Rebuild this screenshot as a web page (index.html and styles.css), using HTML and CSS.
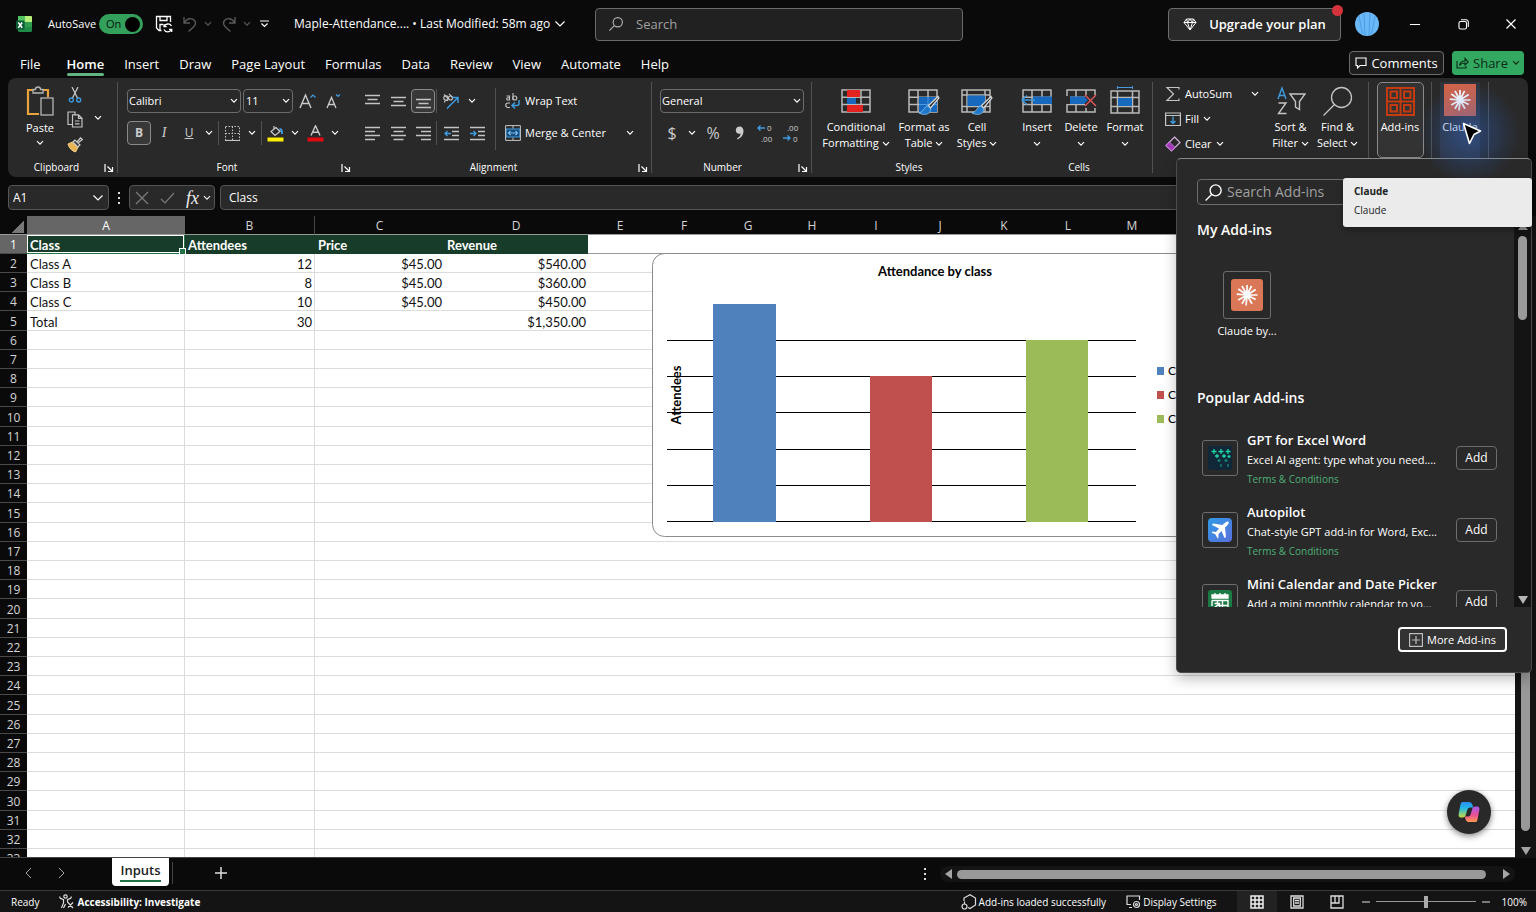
FILE: index.html
```html
<!DOCTYPE html>
<html lang="en">
<head>
<meta charset="utf-8">
<title>Maple-Attendance - Excel</title>
<link rel="stylesheet" href="styles.css">
</head>
<body>
<svg class="defs" aria-hidden="true">
  <symbol id="chev" viewBox="0 0 8 6"><path d="M1 1.2 4 4.2 7 1.2" fill="none" stroke="currentColor" stroke-width="1.2"/></symbol>
  <symbol id="chevbig" viewBox="0 0 12 8"><path d="M1.500 1.500 6 6 10.500 1.500" fill="none" stroke="currentColor" stroke-width="1.2"/></symbol>
  <symbol id="launch" viewBox="0 0 10 10"><path d="M1 9V1M3.500 3.500 8.500 8.500M8.500 4v4.500H4" fill="none" stroke="currentColor" stroke-width="1.2"/></symbol>
  <symbol id="lens" viewBox="0 0 18 18"><circle cx="11" cy="7" r="5.2" fill="none" stroke="currentColor" stroke-width="1.3"/><path d="M7.2 10.8 1.5 16.5" stroke="currentColor" stroke-width="1.3"/></symbol>
  <symbol id="burst" viewBox="0 0 24 24"><path d="M12 12V1M12 12 17 2M12 12 21.500 6M12 12H23.500M12 12 21.500 17M12 12 17.500 21.500M12 12 11 23.500M12 12 6.500 21.500M12 12 2.500 17.500M12 12 .8 11M12 12 2.500 5.500M12 12 6.500 2" fill="none" stroke="#fff" stroke-width="1.9"/><circle cx="12" cy="12" r="3" fill="#fff"/></symbol>
  <symbol id="grid" viewBox="0 0 30 24"><path d="M1 1H29V23H1ZM10 1V23M20 1V23M1 8.300H29M1 15.600H29" fill="none" stroke="#b9b9b9" stroke-width="1.5"/></symbol>
  <symbol id="brush" viewBox="0 0 22 20"><path d="M20 1.500 10.500 10.500 12.500 13 21 3Z" fill="#2a2a2a" stroke="#ddd" stroke-width="1.2"/><path d="M10 11C6 11 7 16 1 18 7 21 13 19 12.500 14Z" fill="#1f78c8" stroke="#8ec6f2" stroke-width=".8"/></symbol>
</svg>

<header class="titlebar">
  <div class="title-left">
    <svg class="logo" viewBox="0 0 16 16"><rect x="2" width="14" height="16" rx="1.500" fill="#1e8a45"/><path d="M2 0h7v6H2z" fill="#4fc35f"/><path d="M9 0h6a1 1 0 0 1 1 1v5H9z" fill="#b9ee7a"/><path d="M9 6h7v5H9z" fill="#2f9d4d"/><rect y="4.500" width="8.500" height="9" rx="1" fill="#0c5c35"/><path d="M2.300 6.500 6.200 11.700M6.200 6.500 2.300 11.700" stroke="#fff" stroke-width="1.500"/></svg>
    <label class="autosave"><span>AutoSave</span><input type="checkbox" checked><span class="switch">On</span></label>
    <button class="tb" aria-label="Save"><svg width="18" height="18" viewBox="0 0 18 18" fill="none" stroke="#fff" stroke-width="1.300"><path d="M6.500 15.500H4L1.500 13V1.500H15.500V7M5 1.500V5.500H12V1.500M5 15V9.500H8"/><path d="M16.500 11A4 4 0 0 0 9.300 11.500M9 9v2.700h2.700M9 14.500a4 4 0 0 0 7.300 0M16.700 17v-2.700h-2.700"/></svg></button>
    <button class="tb dim" aria-label="Undo"><svg width="16" height="16" viewBox="0 0 16 16" fill="none" stroke="currentColor" stroke-width="1.300"><path d="M2 1V7H8M2 7C5 2 10 1.500 12.500 4.500S13 10 6.500 15.500"/></svg><svg class="c"><use href="#chev"/></svg></button>
    <button class="tb dim" aria-label="Redo"><svg width="16" height="16" viewBox="0 0 16 16" fill="none" stroke="currentColor" stroke-width="1.300"><path d="M14 1V7H8M14 7C11 2 6 1.500 3.500 4.500S3 10 9.500 15.500"/></svg><svg class="c"><use href="#chev"/></svg></button>
    <button class="tb" aria-label="Customize toolbar"><svg width="9" height="8" viewBox="0 0 9 8" fill="none" stroke="#fff" stroke-width="1.200"><path d="M0 1H9M1.500 3.500 4.500 6.500 7.500 3.500"/></svg></button>
    <button class="docname">Maple-Attendance.... • Last Modified: 58m ago <svg class="c big"><use href="#chevbig"/></svg></button>
  </div>
  <label class="search"><svg><use href="#lens"/></svg><input type="text" placeholder="Search" aria-label="Search"></label>
  <div class="title-right">
    <button class="upgrade"><svg width="14" height="13" viewBox="0 0 14 13" fill="none" stroke="#fff" stroke-width="1"><path d="M3.500 1H10.500L13 4.500 7 12 1 4.500ZM1 4.500H13M4.500 4.500 7 12 9.500 4.500M3.500 1 4.500 4.500 7 1 9.500 4.500 10.500 1"/></svg>Upgrade your plan<i class="dot"></i></button>
    <svg class="avatar" viewBox="0 0 24 24"><circle cx="12" cy="12" r="12" fill="#6bb8f8"/><path d="M9 1.500 10 23M15 1.500 14 23M4 4 7.500 22M20 4 16.500 22" stroke="#4b9ce6" stroke-width="1" fill="none"/></svg>
    <button class="win" aria-label="Minimize"><svg width="10" height="10" viewBox="0 0 10 10"><path d="M0 5.500H10" stroke="#fff"/></svg></button>
    <button class="win" aria-label="Restore"><svg width="11" height="11" viewBox="0 0 11 11" fill="none" stroke="#fff" stroke-width="1.100"><rect x="1" y="2.500" width="7.500" height="7.500" rx="1.500"/><path d="M3 .8H8A2.200 2.200 0 0 1 10.300 3V8"/></svg></button>
    <button class="win" aria-label="Close"><svg width="10" height="10" viewBox="0 0 10 10"><path d="M.5.500 9.500 9.500M9.500.500.5 9.500" stroke="#fff" stroke-width="1.200"/></svg></button>
  </div>
</header>

<nav class="tabs">
  <button class="file">File</button><button class="on">Home</button><button>Insert</button><button>Draw</button><button>Page Layout</button><button>Formulas</button><button>Data</button><button>Review</button><button>View</button><button>Automate</button><button>Help</button>
  <div class="tabs-right">
    <button class="comments"><svg width="12" height="12" viewBox="0 0 12 12" fill="none" stroke="#fff" stroke-width="1.100"><path d="M1 1H11V8.500H5L2.500 11V8.500H1Z"/></svg>Comments</button>
    <button class="share"><svg width="13" height="12" viewBox="0 0 13 12" fill="none" stroke="#0a2a16" stroke-width="1.100"><path d="M1 4V11H10V9M3.500 8.500C4 5.500 6 4 9 4V1.500L12.300 5 9 8V6C6.500 6 5 6.500 3.500 8.500Z"/></svg>Share <svg class="c"><use href="#chev"/></svg></button>
  </div>
</nav>

<section class="ribbon">
  <div class="group g-clip">
    <div class="body">
      <button class="large paste"><svg width="28" height="30" viewBox="0 0 28 30" fill="none"><path d="M7 4H2V28H13M17 4H22V11" stroke="#e8a33d" stroke-width="2.200"/><path d="M7 7V3.500H9.500A2.500 2.500 0 0 1 14.500 3.500H17V7Z" stroke="#b5b5b5" stroke-width="1.300"/><rect x="15" y="12" width="12" height="17" fill="#2a2a2a" stroke="#b5b5b5" stroke-width="1.300"/></svg><span>Paste</span><svg class="c"><use href="#chev"/></svg></button>
      <div class="stack">
        <button aria-label="Cut"><svg width="14" height="16" viewBox="0 0 14 16" fill="none"><path d="M4 0 9.500 11M10 0 4.500 11" stroke="#ccc" stroke-width="1.200"/><circle cx="3.300" cy="13" r="2" stroke="#3f9be0" stroke-width="1.300"/><circle cx="10.700" cy="13" r="2" stroke="#3f9be0" stroke-width="1.300"/></svg></button>
        <button aria-label="Copy"><svg width="16" height="17" viewBox="0 0 16 17" fill="none" stroke="#c4c4c4" stroke-width="1.200"><path d="M5.500 13.500H1V1H8V3.500M5.500 3.800H11.500L15 7.300V16H5.500ZM11.500 3.800V7.300H15M8 10H12.500M8 12.800H12.500"/></svg></button>
        <button aria-label="Format painter"><svg width="16" height="16" viewBox="0 0 16 16" fill="none"><path d="M1 7 5.500 5 11 10.500 8.500 15C5 14 2 11 1 7Z" fill="#e9b452" stroke="#f3cf8a"/><path d="M6 5 8 3 10 5 13.500.8 15.300 2.500 11 6 13 8 10.800 10Z" fill="#333" stroke="#ccc" stroke-width="1.200"/></svg></button>
      </div>
      <button class="mini" aria-label="Copy options"><svg class="c"><use href="#chev"/></svg></button>
    </div>
    <div class="label">Clipboard<button class="launcher" aria-label="Clipboard settings"><svg><use href="#launch"/></svg></button></div>
  </div>

  <div class="group g-font">
    <div class="rows">
      <div class="row"><select class="sel s-font" aria-label="Font"><option>Calibri</option></select><select class="sel s-size" aria-label="Font size"><option>11</option></select>
        <button class="ib" aria-label="Grow font"><svg width="18" height="16" viewBox="0 0 18 16" fill="none"><path d="M1 15 6.500 2 12 15M3 10.500H10" stroke="#ccc" stroke-width="1.400"/><path d="M11.500 4.500 14 2 16.500 4.500" stroke="#3f9be0" stroke-width="1.200"/></svg></button>
        <button class="ib" aria-label="Shrink font"><svg width="16" height="16" viewBox="0 0 16 16" fill="none"><path d="M1 15 5.500 4.500 10 15M2.500 11.500H8.500" stroke="#ccc" stroke-width="1.300"/><path d="M10 1.500 12 3.500 14 1.500" stroke="#3f9be0" stroke-width="1.200"/></svg></button></div>
      <div class="row"><button class="sq on"><b>B</b></button><button class="ib"><i class="serif">I</i></button><button class="sq"><u>U</u></button><button class="mini" aria-label="Underline style"><svg class="c"><use href="#chev"/></svg></button><i class="sep"></i>
        <button class="sq" aria-label="Borders"><svg width="15" height="15" viewBox="0 0 15 15" fill="none" stroke="#c4c4c4"><path stroke-dasharray="1.500 1.500" d="M.5.500H14.500V14.500H.5ZM7.500.500V14.500M.5 7.500H14.500"/><path d="M0 14.500H15" stroke-width="1.200"/></svg></button><button class="mini" aria-label="Border style"><svg class="c"><use href="#chev"/></svg></button><i class="sep"></i>
        <button class="sq" aria-label="Fill color"><svg width="17" height="17" viewBox="0 0 17 17" fill="none"><path d="M7 1V5M9 2.500 13 6.500 8 10.500 4 6.500Z" stroke="#ccc" stroke-width="1.200"/><path d="M12.500 4C15 4 15 6 15 9" stroke="#3f9be0" stroke-width="1.800"/><path d="M.5 12.500H16.500V16.500H.5Z" fill="#ffee00"/></svg></button><button class="mini" aria-label="Fill colors"><svg class="c"><use href="#chev"/></svg></button>
        <button class="sq" aria-label="Font color"><svg width="17" height="17" viewBox="0 0 17 17"><path d="M4 10.500 8.500.8 13 10.500M5.600 7.300H11.400" fill="none" stroke="#ccc" stroke-width="1.400"/><path d="M.5 12.500H16.500V16.500H.5Z" fill="#e00b10"/></svg></button><button class="mini" aria-label="Font colors"><svg class="c"><use href="#chev"/></svg></button></div>
    </div>
    <div class="label">Font<button class="launcher" aria-label="Font settings"><svg><use href="#launch"/></svg></button></div>
  </div>

  <div class="group g-align">
    <div class="body">
      <div class="rows">
        <div class="row"><button class="ib" aria-label="Top align"><svg class="al" viewBox="0 0 15 15"><path d="M0 1.500H15M2.500 5.500H12.500M0 9.500H15"/></svg></button><button class="ib" aria-label="Middle align"><svg class="al" viewBox="0 0 15 15"><path d="M0 3.500H15M2.500 7.500H12.500M0 11.500H15"/></svg></button><button class="sq on" aria-label="Bottom align"><svg class="al" viewBox="0 0 15 15"><path d="M0 5.500H15M2.500 9.500H12.500M0 13.500H15"/></svg></button><i class="sep"></i>
          <button class="ib" aria-label="Orientation"><svg width="18" height="17" viewBox="0 0 18 17" fill="none"><g stroke="#c4c4c4" stroke-width="1.100"><circle cx="4" cy="5" r="2.200"/><path d="M2 1.500 6.500 6M7 .8 11 5"/><circle cx="8.500" cy="5" r="2"/><path d="M2.500 9.500A2 2 0 0 1 6 8"/></g><path d="M5 15.500 15.500 5M10.500 4.500H16V10" stroke="#3f9be0" stroke-width="1.500"/></svg></button><button class="mini" aria-label="Orientation options"><svg class="c"><use href="#chev"/></svg></button></div>
        <div class="row"><button class="ib" aria-label="Align left"><svg class="al" viewBox="0 0 15 15"><path d="M0 1.500H15M0 5.500H10M0 9.500H15M0 13.500H10"/></svg></button><button class="ib" aria-label="Center"><svg class="al" viewBox="0 0 15 15"><path d="M0 1.500H15M2.500 5.500H12.500M0 9.500H15M2.500 13.500H12.500"/></svg></button><button class="sq" aria-label="Align right"><svg class="al" viewBox="0 0 15 15"><path d="M0 1.500H15M5 5.500H15M0 9.500H15M5 13.500H15"/></svg></button><i class="sep"></i>
          <button class="ib" aria-label="Decrease indent"><svg class="al" viewBox="0 0 15 15"><path d="M0 1.500H15M8 5.500H15M8 9.500H15M0 13.500H15"/><path class="bl" d="M7 7.500H1M3.500 5 1 7.500 3.500 10"/></svg></button><button class="ib" aria-label="Increase indent"><svg class="al" viewBox="0 0 15 15"><path d="M0 1.500H15M8 5.500H15M8 9.500H15M0 13.500H15"/><path class="bl" d="M0 7.500H6M3.500 5 6 7.500 3.500 10"/></svg></button></div>
      </div>
      <i class="sep tall"></i>
      <div class="rows">
        <div class="row"><button class="txt"><svg width="16" height="16" viewBox="0 0 16 16" fill="none" stroke="#c4c4c4" stroke-width="1.100"><path d="M1.500 3H4.500V7H2.500A1.200 1.200 0 0 1 2.500 4.800H4.500M8 0V7"/><circle cx="9.800" cy="5" r="2"/><path d="M5 10H3A1.800 1.800 0 0 0 3 14.500H5"/><path d="M14 7V10.500Q14 12.500 12 12.500H7.500M10 9.500 7 12.500 10 15.500" stroke="#3f9be0" stroke-width="1.500"/></svg>Wrap Text</button></div>
        <div class="row"><button class="txt"><svg width="16" height="16" viewBox="0 0 16 16" fill="none"><path d="M1 4H15V12H1Z" fill="#174b78" stroke="#3f9be0" stroke-width="1.200"/><path d="M.6.600H15.400V15.400H.6ZM8 .6V3.500M8 12.500V15.400" stroke="#c4c4c4"/><path d="M3.500 8H12.500M5.500 6 3.500 8 5.500 10M10.500 6 12.500 8 10.500 10" stroke="#7cc0f5" stroke-width="1.100"/></svg>Merge &amp; Center</button><button class="mini far" aria-label="Merge options"><svg class="c"><use href="#chev"/></svg></button></div>
      </div>
    </div>
    <div class="label">Alignment<button class="launcher" aria-label="Alignment settings"><svg><use href="#launch"/></svg></button></div>
  </div>

  <div class="group g-num">
    <div class="rows">
      <div class="row"><select class="sel s-num" aria-label="Number format"><option>General</option></select></div>
      <div class="row"><button class="sq sym">$</button><button class="mini" aria-label="Currency"><svg class="c"><use href="#chev"/></svg></button><button class="ib sym">%</button><button class="ib" aria-label="Comma style"><svg width="9" height="14" viewBox="0 0 9 14"><path d="M4.500.500C7 .5 8.500 2.500 8.500 5 8.500 9 6 12 2.500 13.500L2 12.500C4.500 11 5.500 9.500 5.500 7.500 3 8.500.8 7 .8 4.300.8 2 2.500.5 4.500.5Z" fill="#ccc"/></svg></button>
        <button class="ib dec" aria-label="Increase decimal"><svg width="17" height="20" viewBox="0 0 17 20"><text x="10" y="8">0</text><text x="4" y="19">.00</text><path class="bl" d="M8 5H1M3.500 2.500 1 5 3.500 7.500"/></svg></button><button class="ib dec" aria-label="Decrease decimal"><svg width="17" height="20" viewBox="0 0 17 20"><text x="4" y="8">.00</text><text x="10" y="19">0</text><path class="bl" d="M0 15H7M4.500 12.500 7 15 4.500 17.500"/></svg></button></div>
    </div>
    <div class="label">Number<button class="launcher" aria-label="Number settings"><svg><use href="#launch"/></svg></button></div>
  </div>

  <div class="group g-styles">
    <div class="body">
      <button class="large w-cf"><svg width="30" height="30" viewBox="0 0 30 30"><svg y="3" width="30" height="24"><use href="#grid"/><path d="M6 1H19V8H6ZM6 16H22V23H6Z" fill="#e3231f"/><path d="M6 9H15V15H6Z" fill="#1769bd"/></svg></svg><span>Conditional<br>Formatting <svg class="c"><use href="#chev"/></svg></span></button>
      <button class="large w-ft"><svg width="32" height="30" viewBox="0 0 32 30"><svg y="3" width="30" height="24"><use href="#grid"/><path d="M11 8H29V23H11Z" fill="#1769bd"/><path d="M20 8V23M11 15.500H29" stroke="#4b9be0"/></svg><svg x="10" y="9" width="22" height="20"><use href="#brush"/></svg></svg><span>Format as<br>Table <svg class="c"><use href="#chev"/></svg></span></button>
      <button class="large w-cs"><svg width="32" height="30" viewBox="0 0 32 30"><svg y="3" width="30" height="24"><path d="M1 1H29V23H1ZM6 1V23M24 1V23M1 6H29M1 17.500H29" fill="none" stroke="#b9b9b9" stroke-width="1.500"/><path d="M6.500 6.500H24V17H6.500Z" fill="#1769bd"/></svg><svg x="10" y="9" width="22" height="20"><use href="#brush"/></svg></svg><span>Cell<br>Styles <svg class="c"><use href="#chev"/></svg></span></button>
    </div>
    <div class="label">Styles</div>
  </div>

  <div class="group g-cells">
    <div class="body">
      <button class="large w-in"><svg width="32" height="30" viewBox="0 0 32 30"><svg x="1" y="3" width="30" height="24"><use href="#grid"/></svg><path d="M12 10.500H31V18H12Z" fill="#1769bd"/><path d="M14 14H1M6 9.500 1 14 6 18.500" stroke="#3f9be0" stroke-width="1.300" fill="none"/></svg><span>Insert<br><svg class="c"><use href="#chev"/></svg></span></button>
      <button class="large w-in"><svg width="32" height="30" viewBox="0 0 32 30"><svg x="1" y="3" width="30" height="24"><use href="#grid"/></svg><path d="M20 9H32V22H20ZM0 10H5V18H0Z" fill="#292929"/><path d="M5 10.500H19L23 14 19 18H5Z" fill="#1769bd"/><path d="M20 9 31 20M31 9 20 20" stroke="#e8575c" stroke-width="1.400"/></svg><span>Delete<br><svg class="c"><use href="#chev"/></svg></span></button>
      <button class="large w-in"><svg width="30" height="30" viewBox="0 0 30 30"><path d="M7 1.500H23M7.500 0V3M22.500 0V3" stroke="#4b9be0" stroke-width="1"/><svg y="4" width="30" height="24"><path d="M1 1H29V23H1ZM7.500 1V23M22.500 1V23M1 7.500H29M1 16.500H29" fill="none" stroke="#b9b9b9" stroke-width="1.500"/><path d="M8 8H22V16H8Z" fill="#1769bd"/></svg></svg><span>Format<br><svg class="c"><use href="#chev"/></svg></span></button>
    </div>
    <div class="label">Cells</div>
  </div>

  <div class="group g-edit">
    <div class="body">
      <div class="lines">
        <div class="line"><button class="txt"><svg width="16" height="16" viewBox="0 0 16 16" fill="none" stroke="#c4c4c4" stroke-width="1.200"><path d="M14 3.500V1.500H2L8.500 8 2 14.500H14V12.500"/></svg>AutoSum</button><button class="mini" aria-label="AutoSum options"><svg class="c"><use href="#chev"/></svg></button></div>
        <button class="txt"><svg width="16" height="16" viewBox="0 0 16 16" fill="none"><path d="M.6 2H15.400V14.500H.6ZM.6 4.500H15.400" stroke="#c4c4c4" stroke-width="1.200"/><path d="M8 5.500V12.500M5.500 10 8 12.500 10.500 10" stroke="#3f9be0" stroke-width="1.400"/></svg>Fill <svg class="c"><use href="#chev"/></svg></button>
        <button class="txt"><svg width="16" height="16" viewBox="0 0 16 16" fill="none"><path d="M9.500 1 15 6.500 6.500 15 1 9.500Z" stroke="#d5b3de" stroke-width="1.200"/><path d="M4.500 6 10 11.500 6.500 15 1 9.500Z" fill="#a13bb8" stroke="#c774d8"/></svg>Clear <svg class="c"><use href="#chev"/></svg></button>
      </div>
      <button class="large w-sf"><svg width="30" height="30" viewBox="0 0 30 30" fill="none" stroke-width="1.400"><path d="M2 13 6 2 10 13M3.500 9.500H8.500" stroke="#3f9be0"/><path d="M2.500 17H10L2.500 27.500H10.500M14 8H29L23.500 15.500V23.500L19.500 21V15.500Z" stroke="#c4c4c4"/></svg><span>Sort &amp;<br>Filter <svg class="c"><use href="#chev"/></svg></span></button>
      <button class="large w-sf"><svg width="32" height="30" viewBox="0 0 32 30" fill="none" stroke="#c4c4c4" stroke-width="1.300"><circle cx="19.500" cy="11.500" r="10"/><path d="M12.500 18.500 1.500 29.500"/></svg><span>Find &amp;<br>Select <svg class="c"><use href="#chev"/></svg></span></button>
    </div>
  </div>

  <div class="group g-one">
    <button class="large boxed"><svg width="29" height="29" viewBox="0 0 29 29" fill="none" stroke="#c43b0f" stroke-width="2"><path d="M1 1H28V28H1ZM14.500 1V28M1 14.500H28M4.500 4.500H11V11H4.500ZM18 4.500H24.500V11H18ZM4.500 18H11V24.500H4.500ZM18 18H24.500V24.500H18Z"/></svg><span>Add-ins</span></button>
  </div>
  <div class="group g-one g-claude">
    <button class="large tinted"><svg width="32" height="32" viewBox="0 0 32 32"><rect width="32" height="32" fill="#d0634a"/><svg x="5" y="5" width="22" height="22"><use href="#burst"/></svg></svg><span>Claude</span></button>
  </div>
</section>

<div class="formula">
  <label class="namebox"><input type="text" value="A1" aria-label="Name box"><svg class="c big"><use href="#chevbig"/></svg></label>
  <i class="vdots"></i>
  <div class="fxbox"><button aria-label="Cancel"><svg width="14" height="14" viewBox="0 0 14 14" stroke="#7c7c7c" stroke-width="1.200"><path d="M1 1 13 13M13 1 1 13"/></svg></button><button aria-label="Enter"><svg width="15" height="12" viewBox="0 0 15 12" fill="none" stroke="#7c7c7c" stroke-width="1.200"><path d="M1 7 5 11 14 1"/></svg></button><button class="fx">fx<svg class="c"><use href="#chev"/></svg></button></div>
  <input class="fxinput" type="text" value="Class" aria-label="Formula bar">
</div>

<main class="work">
  <div class="sheet">
    <table>
      <colgroup><col class="k0"><col class="k1"><col class="k2"><col class="k3"><col class="k4"><col span="15" class="k5"></colgroup>
      <thead><tr><th class="corner"></th><th class="cur">A</th><th>B</th><th>C</th><th>D</th><th>E</th><th>F</th><th>G</th><th>H</th><th>I</th><th>J</th><th>K</th><th>L</th><th>M</th><th>N</th><th>O</th><th>P</th><th>Q</th><th>R</th><th>S</th></tr></thead>
      <tbody>
        <tr class="head"><th class="cur">1</th><td class="active">Class</td><td>Attendees</td><td>Price</td><td>Revenue</td><td colspan="15" class="blank"></td></tr>
        <tr><th>2</th><td>Class A</td><td class="n">12</td><td class="n">$45.00</td><td class="n">$540.00</td><td colspan="15"></td></tr>
        <tr><th>3</th><td>Class B</td><td class="n">8</td><td class="n">$45.00</td><td class="n">$360.00</td><td colspan="15"></td></tr>
        <tr><th>4</th><td>Class C</td><td class="n">10</td><td class="n">$45.00</td><td class="n">$450.00</td><td colspan="15"></td></tr>
        <tr><th>5</th><td>Total</td><td class="n">30</td><td></td><td class="n">$1,350.00</td><td colspan="15"></td></tr>
        <tr><th>6</th><td></td><td></td><td colspan="17"></td></tr>
        <tr><th>7</th><td></td><td></td><td colspan="17"></td></tr>
        <tr><th>8</th><td></td><td></td><td colspan="17"></td></tr>
        <tr><th>9</th><td></td><td></td><td colspan="17"></td></tr>
        <tr><th>10</th><td></td><td></td><td colspan="17"></td></tr>
        <tr><th>11</th><td></td><td></td><td colspan="17"></td></tr>
        <tr><th>12</th><td></td><td></td><td colspan="17"></td></tr>
        <tr><th>13</th><td></td><td></td><td colspan="17"></td></tr>
        <tr><th>14</th><td></td><td></td><td colspan="17"></td></tr>
        <tr><th>15</th><td></td><td></td><td colspan="17"></td></tr>
        <tr><th>16</th><td></td><td></td><td colspan="17"></td></tr>
        <tr><th>17</th><td></td><td></td><td colspan="17"></td></tr>
        <tr><th>18</th><td></td><td></td><td colspan="17"></td></tr>
        <tr><th>19</th><td></td><td></td><td colspan="17"></td></tr>
        <tr><th>20</th><td></td><td></td><td colspan="17"></td></tr>
        <tr><th>21</th><td></td><td></td><td colspan="17"></td></tr>
        <tr><th>22</th><td></td><td></td><td colspan="17"></td></tr>
        <tr><th>23</th><td></td><td></td><td colspan="17"></td></tr>
        <tr><th>24</th><td></td><td></td><td colspan="17"></td></tr>
        <tr><th>25</th><td></td><td></td><td colspan="17"></td></tr>
        <tr><th>26</th><td></td><td></td><td colspan="17"></td></tr>
        <tr><th>27</th><td></td><td></td><td colspan="17"></td></tr>
        <tr><th>28</th><td></td><td></td><td colspan="17"></td></tr>
        <tr><th>29</th><td></td><td></td><td colspan="17"></td></tr>
        <tr><th>30</th><td></td><td></td><td colspan="17"></td></tr>
        <tr><th>31</th><td></td><td></td><td colspan="17"></td></tr>
        <tr><th>32</th><td></td><td></td><td colspan="17"></td></tr>
        <tr><th>33</th><td></td><td></td><td colspan="17"></td></tr>
      </tbody>
    </table>
    <svg class="chart" width="566" height="284" viewBox="0 0 566 284" role="img" aria-label="Attendance by class">
      <rect x=".5" y=".5" width="565" height="283" rx="12" fill="#fff" stroke="#8c8c8c"/>
      <text x="283" y="23" text-anchor="middle" class="ct">Attendance by class</text>
      <path d="M15 87.500H484M15 123.500H484M15 159.500H484M15 196.500H484M15 232.500H484M15 268.500H484" stroke="#000"/>
      <path d="M61 51H124V269H61Z" fill="#4f81bd"/><path d="M218 123H280V269H218Z" fill="#c0504d"/><path d="M374 87H436V269H374Z" fill="#9bbb59"/>
      <text transform="translate(29 142) rotate(-90)" text-anchor="middle" class="ct">Attendees</text>
      <path d="M505 114H512V122H505Z" fill="#4f81bd"/><path d="M505 138H512V146H505Z" fill="#c0504d"/><path d="M505 162H512V170H505Z" fill="#9bbb59"/>
      <text x="516" y="122" class="cl">Class A</text><text x="516" y="146" class="cl">Class B</text><text x="516" y="170" class="cl">Class C</text>
    </svg>
    <button class="copilot" aria-label="Copilot"><svg width="22" height="22" viewBox="0 0 24 24"><defs><linearGradient id="c1" x2="0" y2="1"><stop stop-color="#2d8cf0"/><stop offset=".4" stop-color="#22b8e6"/><stop offset="1" stop-color="#c5dc3c"/></linearGradient><linearGradient id="c2" x2="0" y2="1"><stop stop-color="#a55cf0"/><stop offset=".55" stop-color="#ec4f95"/><stop offset="1" stop-color="#ff9a4d"/></linearGradient></defs><path d="M5 1H12Q15 1 16 5L16.500 7H13Q10.500 7 10 10L8.500 15Q8 18 5 18H3Q0 18 .8 14L2.500 5Q3 1 5 1Z" fill="url(#c1)"/><path d="M19 23H12Q9 23 8 19L7.500 17H11Q13.500 17 14 14L15.500 9Q16 6 19 6H21Q24 6 23.200 10L21.500 19Q21 23 19 23Z" fill="url(#c2)"/></svg></button>
  </div>
  <div class="vscroll"><i class="vthumb"></i><svg width="10" height="8"><path d="M0 0H10L5 8Z" fill="#a5a5a5"/></svg></div>
</main>

<div class="sheetbar">
  <button class="nav" aria-label="Previous sheet"><svg width="7" height="12" viewBox="0 0 7 12" fill="none" stroke="#a5a5a5"><path d="M6 1 1 6 6 11"/></svg></button>
  <button class="nav" aria-label="Next sheet"><svg width="7" height="12" viewBox="0 0 7 12" fill="none" stroke="#a5a5a5"><path d="M1 1 6 6 1 11"/></svg></button>
  <button class="sheettab"><span>Inputs</span></button><i class="sep"></i>
  <button class="add" aria-label="New sheet"><svg width="12" height="12"><path d="M0 6H12M6 0V12" stroke="#ddd" stroke-width="1.500"/></svg></button>
  <i class="vdots push"></i>
  <div class="hscroll"><svg width="7" height="10"><path d="M7 0V10L0 5Z" fill="#a5a5a5"/></svg><i class="hthumb"></i><svg width="7" height="10"><path d="M0 0V10L7 5Z" fill="#a5a5a5"/></svg></div>
</div>

<footer class="status">
  <span class="ready">Ready</span>
  <button class="acc"><svg width="15" height="15" viewBox="0 0 15 15" fill="none" stroke="#ddd" stroke-width="1.200"><circle cx="6.500" cy="2.500" r="1.700"/><path d="M1 2.500Q0 4.500 4.500 5.500V9L2.500 14M12 2.500Q13 4.500 8.500 5.500V8L14 14M9 13.500 14 8.500M4.500 14 6.500 10"/></svg><b>Accessibility: Investigate</b></button>
  <button class="loaded"><svg width="16" height="16" viewBox="0 0 16 16" fill="none" stroke="#ddd" stroke-width="1.200"><path d="M3 7V4L9 .8 14.500 4V11L9 14.500 7 13.500"/><circle cx="3.500" cy="12.500" r="2.500"/><path d="M3.500 10V7.500"/></svg>Add-ins loaded successfully</button>
  <button class="disp"><svg width="15" height="14" viewBox="0 0 15 14" fill="none" stroke="#ddd" stroke-width="1.200"><path d="M5 9.500H1V1H13.500V5M3 12.500H6"/><circle cx="10.500" cy="9.500" r="3"/><circle cx="10.500" cy="9.500" r="1"/></svg>Display Settings</button>
  <button class="view cur" aria-label="Normal view"><svg width="14" height="14" viewBox="0 0 14 14" fill="none" stroke="#eee" stroke-width="1.500"><path d="M1 1H13V13H1ZM5 1V13M9 1V13M1 5H13M1 9H13"/></svg></button>
  <button class="view" aria-label="Page layout view"><svg width="14" height="14" viewBox="0 0 14 14" fill="none" stroke="#ddd" stroke-width="1.300"><path d="M1 1H13V13H1ZM3.700 3H10.300V11H3.700ZM5 5.500H9M5 8H9"/></svg></button>
  <button class="view" aria-label="Page break view"><svg width="14" height="14" viewBox="0 0 14 14" fill="none" stroke="#ddd" stroke-width="1.300"><path d="M1 1H13V13H1ZM1 8H9V1M5 1V8"/></svg></button>
  <div class="zoom"><button aria-label="Zoom out"><svg width="8" height="8"><path d="M0 4H8" stroke="#ddd"/></svg></button><input type="range" min="0" max="200" value="100" aria-label="Zoom"><button aria-label="Zoom in"><svg width="8" height="8"><path d="M0 4H8" stroke="#ddd"/></svg></button></div>
  <button class="pct">100%</button>
</footer>

<aside class="panel" aria-label="Add-ins">
  <label class="psearch"><svg><use href="#lens"/></svg><input type="text" placeholder="Search Add-ins" aria-label="Search Add-ins"></label>
  <div class="pbody">
    <div class="plist">
      <h2>My Add-ins</h2>
      <button class="mine"><span class="tile"><svg width="32" height="32" viewBox="0 0 32 32"><rect width="32" height="32" rx="3" fill="#d97757"/><svg x="5" y="5" width="22" height="22"><use href="#burst"/></svg></svg></span>Claude by...</button>
      <h2>Popular Add-ins</h2>
      <div class="item"><span class="ico"><svg width="24" height="24" viewBox="0 0 24 24"><rect width="24" height="24" rx="2" fill="#11283a"/><g stroke="#1fd6a0" stroke-width="1.300"><path d="M6 3V8M3.500 5.500H8.500M13 3V8M10.500 5.500H15.500M20 3V8M17.500 5.500H22.500M9 8V12M7 10H11M16 8V12M14 10H18M21 9V12M19.500 10.500H22.500"/><path d="M11 13V16M9.500 14.500H12.500M18 13V16M16.500 14.500H19.500M13 18V21M20 18V21" opacity=".55"/></g></svg></span><div class="info"><h3>GPT for Excel Word</h3><p>Excel AI agent: type what you need....</p><a href="#">Terms &amp; Conditions</a></div><button class="addbtn">Add</button></div>
      <div class="item"><span class="ico"><svg width="24" height="24" viewBox="0 0 24 24"><defs><linearGradient id="ap" x2="1" y2="1"><stop stop-color="#2f9be6"/><stop offset="1" stop-color="#5a6fdc"/></linearGradient></defs><rect width="24" height="24" rx="4" fill="url(#ap)"/><path d="M20.500 3.500Q18 3 14.500 7L5 5.500 4 7 11 10.500 8 14 4.500 13.500 3.500 14.500 7.500 16.500 9.500 20.500 10.500 19.500 10.500 16 13.500 13 16.500 20 18 19 17 9.500Q21.500 6 20.500 3.500Z" fill="#fff"/></svg></span><div class="info"><h3>Autopilot</h3><p>Chat-style GPT add-in for Word, Exc...</p><a href="#">Terms &amp; Conditions</a></div><button class="addbtn">Add</button></div>
      <div class="item"><span class="ico"><svg width="24" height="24" viewBox="0 0 24 24"><rect width="24" height="24" rx="3" fill="#1c7a45"/><path d="M4 5H20V8H4ZM7 3V6M12 3V6M17 3V6" fill="#fff" stroke="#fff" stroke-width="1.300"/><path d="M4 10.500H20V21H4M9.500 10.500V13M14.500 10.500V21M11 15.500H20M4 10.500V16M3 20.500 11 14M6.500 13.500H11.500V18.500" stroke="#fff" fill="none" stroke-width="1.400"/></svg></span><div class="info"><h3>Mini Calendar and Date Picker</h3><p>Add a mini monthly calendar to yo...</p><a href="#">Terms &amp; Conditions</a></div><button class="addbtn">Add</button></div>
    </div>
    <div class="pscroll"><svg width="10" height="7"><path d="M0 7H10L5 0Z" fill="#999"/></svg><i></i><svg width="10" height="8"><path d="M0 0H10L5 8Z" fill="#b5b5b5"/></svg></div>
  </div>
  <div class="pfoot"><button class="more"><svg width="14" height="14" viewBox="0 0 14 14" fill="none" stroke="#bbb" stroke-width="1.200"><path d="M.6.600H13.400V13.400H.6ZM7 3V11M3 7H11"/></svg>More Add-ins</button></div>
</aside>
<div class="glow"></div>
<div class="tip" role="tooltip"><b>Claude</b><span>Claude</span></div>
<svg class="cursor" width="20" height="23" viewBox="0 0 20 23"><path d="M1.500 1.500 18.500 9 12 12.500 7.500 21.500Z" fill="#000" stroke="#fff" stroke-width="1.600" stroke-linejoin="round"/></svg>
</body>
</html>
```
FILE: styles.css
```css
* { box-sizing: border-box; }
body { margin: 0; height: 100vh; overflow: hidden; display: flex; flex-direction: column; position: relative; background: #0a0a0a; color: #fff; font: 12px/16px "Open Sans", "Noto Sans", sans-serif; }
button, input, select { font: inherit; color: inherit; background: none; border: 0; padding: 0; margin: 0; outline: 0; min-width: 0; }
button { display: inline-flex; align-items: center; justify-content: center; white-space: nowrap; flex: none; }
i { font-style: normal; }
svg { flex: none; }
.defs { position: absolute; width: 0; height: 0; }
.c { width: 8px; height: 6px; display: inline-block; vertical-align: middle; }
.c.big { width: 12px; height: 8px; }
.bl { stroke: #3f9be0; stroke-width: 1.4; fill: none; }

/* title bar */
.titlebar { height: 48px; flex: none; display: flex; align-items: center; }
.title-left { display: flex; align-items: center; flex: 0 0 595px; padding-left: 16px; font-size: 11px; }
.logo { width: 16px; height: 16px; margin-right: 16px; }
.autosave { display: flex; align-items: center; gap: 3px; margin-right: 12px; }
.autosave input { position: absolute; opacity: 0; }
.switch { width: 44px; height: 20px; border-radius: 10px; background: #33a15c; color: #06150c; padding: 0 3px 0 7px; display: flex; align-items: center; justify-content: space-between; }
.switch::after { content: ""; width: 15px; height: 15px; border-radius: 50%; background: #000; }
.tb { height: 24px; gap: 6px; margin-right: 9px; }
.dim { color: #5a5a5a; }
.docname { gap: 4px; margin-left: 16px; font-size: 12px; }
.search { flex: 0 1 368px; height: 33px; display: flex; align-items: center; gap: 12px; padding-left: 12px; background: #212121; border: 1px solid #6a6a6a; border-radius: 4px; color: #b0b0b0; font-size: 13px; }
.search svg { width: 16px; height: 16px; }
.search input { flex: 1; }
input::placeholder { color: #a0a0a0; opacity: 1; }
.title-right { margin-left: auto; padding-right: 1px; display: flex; align-items: center; }
.upgrade { position: relative; width: 173px; height: 33px; gap: 12px; background: #292929; border: 1px solid #6c6c6c; border-radius: 4px; font-size: 13px; font-weight: 600; }
.dot { position: absolute; right: -3px; top: -4px; width: 11px; height: 11px; border-radius: 50%; background: #d3343b; }
.avatar { width: 24px; height: 24px; margin: 0 12px 0 14px; }
.win { width: 48px; height: 40px; }

/* ribbon tabs */
.tabs { height: 30px; flex: none; display: flex; padding: 3px 12px 0 20px; gap: 20px; font-size: 13px; }
.tabs > button { height: 25px; position: relative; }
.tabs > .file { margin-right: 6px; }
.tabs > .on { font-weight: 600; }
.tabs > .on::after { content: ""; position: absolute; left: 0; right: 0; bottom: 0; height: 3px; border-radius: 2px; background: #62b583; }
.tabs-right { margin-left: auto; display: flex; gap: 8px; }
.comments { width: 95px; height: 24px; gap: 4px; border: 1px solid #6c6c6c; border-radius: 4px; background: #1d1d1d; }
.share { width: 72px; height: 24px; gap: 4px; border-radius: 4px; background: #33a860; color: #0a2a16; }

/* ribbon */
.ribbon { height: 99px; flex: none; margin: 0 8px; display: flex; background: #292929; border-radius: 8px; padding: 4px 0; font-size: 11px; }
.group { display: flex; flex-direction: column; flex: none; border-right: 1px solid #515151; position: relative; }
.g-clip { width: 110px; }
.g-font { width: 236px; border: 0; }
.g-align { width: 298px; }
.g-num { width: 160px; }
.g-styles { width: 194px; border: 0; }
.g-cells { width: 147px; }
.g-edit { width: 216px; }
.g-one { width: 63px; align-items: center; }
.g-claude { width: 57px; }
.body { flex: 1; display: flex; align-items: flex-start; }
.label { height: 16px; margin-bottom: -2px; text-align: center; position: relative; padding-right: 18px; font-size: 10px; }
.g-clip .label { padding-right: 12px; }
.g-styles .label, .g-cells .label { padding-right: 0; }
.launcher { position: absolute; right: 3px; top: 4px; }
.launcher svg { width: 10px; height: 10px; }
.large { flex-direction: column; justify-content: flex-start; height: 76px; padding-top: 4px; gap: 3px; line-height: 16px; text-align: center; }
.paste { width: 48px; margin-left: 8px; gap: 4px; }
.stack { display: flex; flex-direction: column; width: 22px; }
.stack button { height: 25px; width: 22px; }
.stack + .mini { margin-top: 24px; margin-left: 4px; }
.mini { width: 16px; height: 24px; }
.rows { flex: 1; display: flex; flex-direction: column; gap: 8px; padding: 7px 0 0 9px; }
.row { display: flex; align-items: center; height: 24px; }
.ib { width: 26px; height: 24px; }
.sq { width: 24px; height: 24px; font-size: 12px; color: #ccc; }
.sq.on { border: 1px solid #8a8a8a; border-radius: 4px; background: #383838; }
.serif { font: italic 14px "Liberation Serif", serif; color: #ccc; }
.sep { width: 1px; height: 24px; background: #515151; margin: 0 1px; flex: none; }
.sep.tall { height: 62px; margin: 6px 0 0; }
.sel { height: 24px; border: 1px solid #6c6c6c; border-radius: 4px; padding: 0 1px; background: #292929 url("data:image/svg+xml,%3Csvg xmlns='http://www.w3.org/2000/svg' width='8' height='6'%3E%3Cpath d='M1 1.200 4 4.200 7 1.200' fill='none' stroke='white' stroke-width='1.200'/%3E%3C/svg%3E") no-repeat right 2px center; appearance: none; }
.s-font { width: 114px; margin-right: 2px; }
.s-size { width: 50px; margin-right: 2px; padding-left: 2px; }
.s-num { width: 144px; }
.al { width: 15px; height: 15px; fill: none; stroke: #c4c4c4; stroke-width: 1.3; }
.g-align .rows { flex: none; padding-left: 5px; }
.g-align .rows:first-child { width: 141px; }
.g-align .sep.tall + .rows { padding-left: 9px; }
.txt { gap: 4px; height: 24px; }
.far { margin-left: 16px; }
.sym { font-size: 16px; color: #ccc; }
.dec svg { overflow: visible; }
.dec text { font-size: 8px; fill: #ccc; }
.g-num .rows { padding-left: 8px; }
.w-cf { width: 88px; }
.w-ft { width: 48px; }
.w-cs { width: 58px; }
.w-in { width: 44px; }
.g-cells .body { padding-left: 9px; }
.lines { width: 114px; padding-left: 12px; padding-right: 4px; display: flex; flex-direction: column; align-items: flex-start; gap: 1px; }
.line { display: flex; justify-content: space-between; width: 100%; }
.w-sf { width: 47px; }
.boxed { width: 47px; border: 1px solid #8a8a8a; border-radius: 5px; background: #333; }
.tinted { width: 40px; background: #30343c; padding-top: 2px; }

/* formula bar */
.formula { height: 39px; flex: none; display: flex; align-items: center; padding: 2px 8px 0; }
.namebox, .fxbox, .fxinput { height: 25px; background: #292929; border: 1px solid #555; border-radius: 4px; }
.namebox { width: 101px; display: flex; align-items: center; padding: 0 4px; }
.namebox input { flex: 1; }
.vdots { width: 2px; height: 12px; margin: 0 9px; background: repeating-linear-gradient(#ddd 0 2px, transparent 2px 5px); }
.fxbox { width: 86px; display: flex; align-items: center; justify-content: space-between; padding: 0 3px 0 5px; }
.fx { font: italic 18px/20px "Liberation Serif", serif; gap: 4px; color: #eee; }
.fxinput { flex: 1; margin-left: 5px; padding-left: 8px; }

/* sheet */
.work { flex: 1; min-height: 0; display: flex; }
.sheet { flex: 1; min-width: 0; overflow: hidden; position: relative; background: #fff; border-bottom: 1px solid #444; }
table { table-layout: fixed; width: 1548px; border-collapse: separate; border-spacing: 0; color: #111; font: 13px/16px Lato, "Open Sans", sans-serif; }
.k0 { width: 27px; } .k1 { width: 158px; } .k2 { width: 130px; } .k3 { width: 129px; } .k4 { width: 144px; } .k5 { width: 64px; }
th { font: 12px/16px "Open Sans", sans-serif; background: #0a0a0a; color: #d5d5d5; padding: 2px 0 0; overflow: hidden; }
thead th { height: 19px; border-bottom: 1px solid #9a9a9a; }
thead th:nth-child(3) { border-right: 1px solid #444; }
thead .corner { background: linear-gradient(135deg, #0a0a0a 50%, #777 50%) 11px 4px / 13px 13px no-repeat #0a0a0a; }
th.cur { background: #666; color: #fff; }
tbody tr { height: 19px; }
tbody tr:nth-child(5n) { height: 20px; }
tbody th { border-bottom: 1px solid #4a4a4a; }
td { padding: 2px 3px 0; border-bottom: 1px solid #dcdcdc; white-space: nowrap; }
td:nth-child(2), td:nth-child(3) { border-right: 1px solid #dcdcdc; }
.n { text-align: right; padding-right: 2px; }
.head td { background: #183c2a; color: #fff; font-weight: bold; border-color: #183c2a; }
.head .blank { background: #fff; border-color: #9a9a9a; }
.head .active { position: relative; box-shadow: inset 0 0 0 1px #fff; border: 1px solid #217346; border-width: 0 1px 1px 0; }
.active::after { content: ""; position: absolute; right: -2px; bottom: -2px; width: 5px; height: 5px; background: #217346; border: 1px solid #fff; }
.chart { position: absolute; left: 652px; top: 37px; }
.ct { font: bold 13px Lato, sans-serif; }
.cl { font: 12px Lato, sans-serif; }
.copilot { position: absolute; right: 24px; bottom: 23px; width: 44px; height: 44px; border-radius: 50%; background: #292929; box-shadow: 0 2px 6px rgba(0,0,0,.5); }
.vscroll { width: 21px; background: #141414; display: flex; flex-direction: column; align-items: center; padding-bottom: 3px; gap: 16px; }
.vthumb { flex: 1; width: 9px; margin-top: 18px; border-radius: 5px; background: #999; }

/* sheet tabs */
.sheetbar { height: 32px; flex: none; display: flex; align-items: flex-start; padding-right: 21px; padding-left: 12px; }
.nav { width: 33px; height: 30px; }
.sheettab { margin-left: 34px; width: 57px; height: 28px; background: #fff; border-radius: 0 0 4px 4px; color: #222; font-size: 13px; font-weight: 600; }
.sheettab span { border-bottom: 2px solid #217346; height: 20px; }
.sheetbar .sep { margin: 4px 0 0 3px; height: 22px; background: #444; }
.add { margin-left: 36px; width: 24px; height: 30px; }
.push { margin: 10px 14px 0 auto; }
.hscroll { flex: 0 1 575px; margin-top: 8px; height: 16px; display: flex; align-items: center; gap: 5px; padding: 0 5px; background: #141414; border-radius: 8px; }
.hthumb { flex: 1; height: 9px; border-radius: 5px; background: #999; margin-right: 12px; }

/* status bar */
.status { height: 22px; flex: none; display: flex; align-items: center; background: #141414; border-top: 1px solid #3a3a3a; font-size: 10px; padding: 0 9px 0 11px; }
.acc { gap: 3px; margin-left: 20px; }
.loaded { margin-left: auto; gap: 2px; }
.disp { margin: 0 20px; gap: 2px; }
.view { width: 40px; height: 21px; }
.view.cur { background: #222; }
.zoom { display: flex; align-items: center; gap: 6px; margin-left: 5px; }
.zoom input { appearance: none; width: 100px; height: 12px; background: linear-gradient(#999, #999) center / 100% 1px no-repeat; }
.zoom input::-webkit-slider-thumb { appearance: none; width: 4px; height: 12px; background: #aaa; }
.pct { margin-left: 12px; }

/* add-ins panel */
.panel { position: absolute; right: 4px; top: 158px; width: 356px; display: flex; flex-direction: column; background: #292929; border: 1px solid #4a4a4a; border-top-color: #8a8a8a; border-radius: 5px; box-shadow: 0 6px 14px rgba(0,0,0,.25); }
.psearch { margin: 20px 20px 0; height: 26px; display: flex; align-items: center; gap: 4px; padding-left: 6px; border: 1px solid #6c6c6c; border-radius: 4px; font-size: 14px; }
.psearch svg { width: 19px; height: 19px; }
.psearch input { flex: 1; }
.pbody { display: flex; height: 402px; }
.plist { flex: 1; min-width: 0; overflow: hidden; padding: 17px 17px 0 20px; }
h2 { margin: 0; font-size: 14px; line-height: 16px; font-weight: 600; }
.mine { flex-direction: column; gap: 4px; width: 64px; margin: 33px 0 51px 18px; font-size: 11px; }
.tile { width: 48px; height: 48px; display: grid; place-items: center; border: 1px solid #6c6c6c; border-radius: 3px; }
.plist h2 + .item { margin-top: 26px; }
.item { height: 72px; display: flex; align-items: flex-start; padding-left: 5px; }
.ico { width: 36px; height: 36px; margin-top: 8px; border: 1px solid #6c6c6c; border-radius: 3px; display: grid; place-items: center; flex: none; }
.info { flex: 1; min-width: 0; margin: 0 10px 0 9px; }
h3 { margin: 0 0 4px; font-size: 13px; line-height: 16px; font-weight: 600; white-space: nowrap; }
.info p { margin: 0 0 4px; font-size: 11px; line-height: 16px; white-space: nowrap; overflow: hidden; text-overflow: ellipsis; }
.info a { display: block; font-size: 10px; line-height: 14px; color: #4fae78; text-decoration: none; }
.addbtn { width: 41px; height: 24px; margin-top: 14px; border: 1px solid #6c6c6c; border-radius: 4px; }
.pscroll { width: 17px; margin-top: 15px; padding: 3px 0; background: #141414; display: flex; flex-direction: column; align-items: center; gap: 6px; }
.pscroll i { width: 9px; height: 84px; margin-bottom: auto; border-radius: 5px; background: #999; }
.pfoot { padding: 20px 24px 20px; display: flex; justify-content: flex-end; }
.more { width: 109px; height: 25px; gap: 4px; border: 2px solid #fff; border-radius: 4px; background: #333; font-size: 11px; }
.tip { position: absolute; right: 4px; top: 178px; width: 189px; height: 49px; padding: 5px 11px; display: flex; flex-direction: column; gap: 3px; background: #ebebeb; color: #222; border-radius: 3px; font-size: 10px; box-shadow: 0 3px 6px rgba(0,0,0,.3); }
.glow { position: absolute; right: 12px; top: 78px; width: 110px; height: 110px; background: radial-gradient(circle, rgba(45,105,210,.45), rgba(45,105,210,0) 65%); pointer-events: none; }
.cursor { position: absolute; right: 54px; top: 122px; }
```
